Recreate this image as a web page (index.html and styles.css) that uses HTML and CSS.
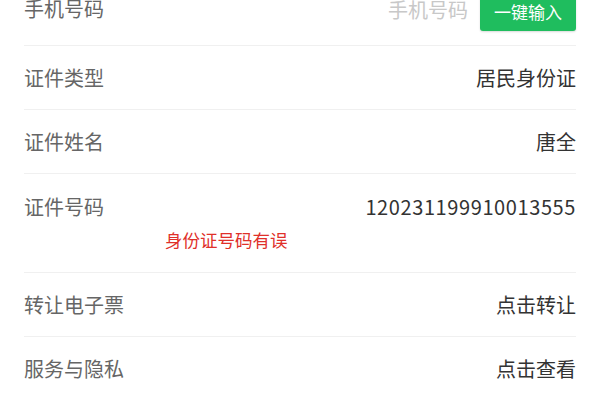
FILE: index.html
```html
<!DOCTYPE html>
<html lang="zh-CN">
<head>
<meta charset="utf-8">
<link rel="stylesheet" href="styles.css">
</head>
<body>
<div class="page">
  <div class="list">
    <div class="row row-first">
      <span class="label">手机号码</span>
      <div class="right">
        <span class="placeholder">手机号码</span>
        <button class="btn">一键输入</button>
      </div>
    </div>
    <div class="row">
      <span class="label">证件类型</span>
      <span class="value">居民身份证</span>
    </div>
    <div class="row">
      <span class="label">证件姓名</span>
      <span class="value">唐全</span>
    </div>
    <div class="row row-tall">
      <div class="line">
        <span class="label">证件号码</span>
        <span class="value num">120231199910013555</span>
      </div>
      <div class="error">身份证号码有误</div>
    </div>
    <div class="row">
      <span class="label">转让电子票</span>
      <span class="value">点击转让</span>
    </div>
    <div class="row">
      <span class="label">服务与隐私</span>
      <span class="value">点击查看</span>
    </div>
  </div>
</div>
</body>
</html>
```
FILE: styles.css
```css
html, body {
  margin: 0;
  padding: 0;
}
body {
  background: #f4f4f4;
  font-family: "Noto Sans CJK SC", "Noto Sans", sans-serif;
  overflow: hidden;
  height: 400px;
}
.page {
  margin-top: -19px;
  background: #ffffff;
  padding: 0 24px;
}
.list {
  display: flex;
  flex-direction: column;
}
.row {
  height: 63px;
  display: flex;
  align-items: center;
  justify-content: space-between;
  border-top: 1px solid #f0f0f0;
}
.row-first {
  border-top: none;
  box-sizing: border-box;
  height: 64px;
  padding-bottom: 8px;
}
.row-tall {
  height: auto;
  flex-direction: column;
  align-items: stretch;
  justify-content: flex-start;
  padding: 19px 0 19px;
}
.line {
  display: flex;
  justify-content: space-between;
  align-items: center;
  height: 28px;
}
.label {
  font-size: 20px;
  color: #666666;
  line-height: 28px;
}
.value {
  font-size: 20px;
  color: #333333;
  line-height: 28px;
}
.num {
  letter-spacing: 0.6px;
}
.right {
  display: flex;
  align-items: center;
  gap: 12px;
}
.placeholder {
  font-size: 20px;
  color: #c8c8c8;
}
.btn {
  border: none;
  background: #1fbd5e;
  color: #ffffff;
  font-family: "Noto Sans CJK SC", "Noto Sans", sans-serif;
  font-size: 17px;
  width: 96px;
  height: 40px;
  border-radius: 3px;
  box-shadow: 0 1px 2px rgba(0, 0, 0, 0.15);
  padding: 0;
  margin-top: 4px;
}
.error {
  margin-top: 6px;
  margin-left: 141px;
  font-size: 17.5px;
  line-height: 26px;
  color: #e0302a;
}
```
